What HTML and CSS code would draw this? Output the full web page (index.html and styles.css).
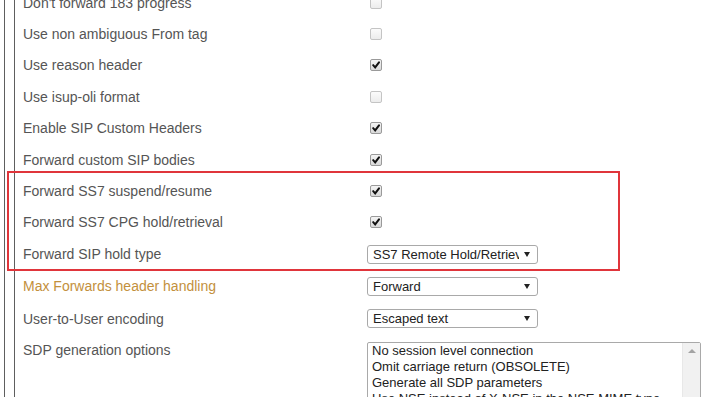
FILE: index.html
```html
<!DOCTYPE html>
<html lang="en">
<head>
    <meta charset="UTF-8">
    <meta name="viewport" content="width=device-width, initial-scale=1.0">
    <title>SIP Interop Settings</title>
    <link rel="stylesheet" href="styles.css">
</head>

<body>
    <div class="frame">
        <div class="panel">
            <div class="settings">
                <div class="row">
                    <div class="label">Don't forward 183 progress</div>
                    <span class="check"></span>
                </div>
                <div class="row">
                    <div class="label">Use non ambiguous From tag</div>
                    <span class="check"></span>
                </div>
                <div class="row">
                    <div class="label">Use reason header</div>
                    <span class="check checked"><svg viewBox="0 0 12 12"><path d="M2.6 6.2 L5 8.8 L9.6 2.8"/></svg></span>
                </div>
                <div class="row">
                    <div class="label">Use isup-oli format</div>
                    <span class="check"></span>
                </div>
                <div class="row">
                    <div class="label">Enable SIP Custom Headers</div>
                    <span class="check checked"><svg viewBox="0 0 12 12"><path d="M2.6 6.2 L5 8.8 L9.6 2.8"/></svg></span>
                </div>
                <div class="row">
                    <div class="label">Forward custom SIP bodies</div>
                    <span class="check checked"><svg viewBox="0 0 12 12"><path d="M2.6 6.2 L5 8.8 L9.6 2.8"/></svg></span>
                </div>

                <!-- highlighted group -->
                <div class="highlight">
                    <div class="row">
                        <div class="label">Forward SS7 suspend/resume</div>
                        <span class="check checked"><svg viewBox="0 0 12 12"><path d="M2.6 6.2 L5 8.8 L9.6 2.8"/></svg></span>
                    </div>
                    <div class="row">
                        <div class="label">Forward SS7 CPG hold/retrieval</div>
                        <span class="check checked"><svg viewBox="0 0 12 12"><path d="M2.6 6.2 L5 8.8 L9.6 2.8"/></svg></span>
                    </div>
                    <div class="row row-select">
                        <div class="label">Forward SIP hold type</div>
                        <div class="select">
                            <span class="select-value">SS7 Remote Hold/Retrieval</span>
                            <span class="select-arrow"></span>
                        </div>
                    </div>
                </div>

                <div class="row row-select">
                    <div class="label label-modified">Max Forwards header handling</div>
                    <div class="select">
                        <span class="select-value">Forward</span>
                        <span class="select-arrow"></span>
                    </div>
                </div>
                <div class="row row-select">
                    <div class="label">User-to-User encoding</div>
                    <div class="select">
                        <span class="select-value">Escaped text</span>
                        <span class="select-arrow"></span>
                    </div>
                </div>
                <div class="row row-list">
                    <div class="label">SDP generation options</div>
                    <div class="listbox">
                        <div class="options">
                            <div class="option">No session level connection</div>
                            <div class="option">Omit carriage return (OBSOLETE)</div>
                            <div class="option">Generate all SDP parameters</div>
                            <div class="option">Use NSE instead of X-NSE in the NSE MIME type</div>
                        </div>
                        <div class="scrollbar">
                            <span class="scroll-up"></span>
                        </div>
                    </div>
                </div>
            </div>
        </div>
    </div>
</body>
</html>
```

FILE: styles.css
```css
/* General body styling */
body {
    font-family: "Liberation Sans", Arial, sans-serif;
    margin: 0;
    padding: 0;
    background-color: #fff;
    overflow: hidden;
}

/* Nested frame borders on the left */
.frame {
    margin-left: 4px;
    border-left: 1px solid #5e5e5e;
    min-height: 100vh;
}

.panel {
    margin-left: 9px;
    border-left: 1px solid #5e5e5e;
    min-height: 100vh;
}

.settings {
    padding-left: 8px;
    margin-top: -13px;
}

/* Rows */
.row {
    display: flex;
    align-items: center;
    height: 31.4px;
}

.row-select {
    height: 32.2px;
}

.row-list {
    align-items: flex-start;
    height: auto;
    padding-top: 7px;
}

.label {
    flex: 0 0 344px;
    font-size: 14px;
    line-height: 16px;
    color: #555;
}

.label-modified {
    color: #c3903c;
}

/* Checkbox */
.check {
    display: inline-block;
    box-sizing: border-box;
    width: 12px;
    height: 12px;
    margin-left: 3px;
    border: 1px solid #c4c4c4;
    border-radius: 2px;
    background: linear-gradient(#fbfbfb, #ececec);
}

.check.checked {
    border-color: #9a9a9a;
    background: linear-gradient(#f4f4f4, #d9d9d9);
}

.check svg {
    display: block;
    width: 10px;
    height: 10px;
}

.check svg path {
    fill: none;
    stroke: #111;
    stroke-width: 2.4;
    stroke-linecap: round;
}

/* Select box */
.select {
    display: flex;
    align-items: center;
    box-sizing: border-box;
    width: 171px;
    height: 19px;
    padding: 0 7px 0 5px;
    border: 1px solid #a9a9a9;
    border-radius: 3px;
    background-color: #fff;
    font-size: 13px;
    color: #222;
}

.select-value {
    flex: 1;
    overflow: hidden;
    white-space: nowrap;
}

.select-arrow {
    width: 0;
    height: 0;
    margin-left: 5px;
    border-left: 3px solid transparent;
    border-right: 3px solid transparent;
    border-top: 5px solid #222;
}

/* Multi select list */
.listbox {
    display: flex;
    box-sizing: border-box;
    width: 334px;
    height: 90px;
    border: 1px solid #a9a9a9;
    border-radius: 2px;
    background-color: #fff;
}

.options {
    flex: 1;
    padding-left: 4px;
    font-size: 13px;
    line-height: 16px;
    color: #222;
    overflow: hidden;
}

.option {
    white-space: nowrap;
}

.scrollbar {
    display: flex;
    justify-content: center;
    width: 17px;
    background-color: #f1f1f1;
    border-left: 1px solid #e8e8e8;
}

.scroll-up {
    width: 0;
    height: 0;
    margin-top: 6px;
    border-left: 4px solid transparent;
    border-right: 4px solid transparent;
    border-bottom: 4px solid #a3a3a3;
}

/* Red annotation box */
.highlight {
    position: relative;
}

.highlight::after {
    content: "";
    position: absolute;
    top: -4px;
    bottom: -1px;
    left: -16px;
    width: 613px;
    box-sizing: border-box;
    border: 2px solid #e0353b;
    pointer-events: none;
}
```
